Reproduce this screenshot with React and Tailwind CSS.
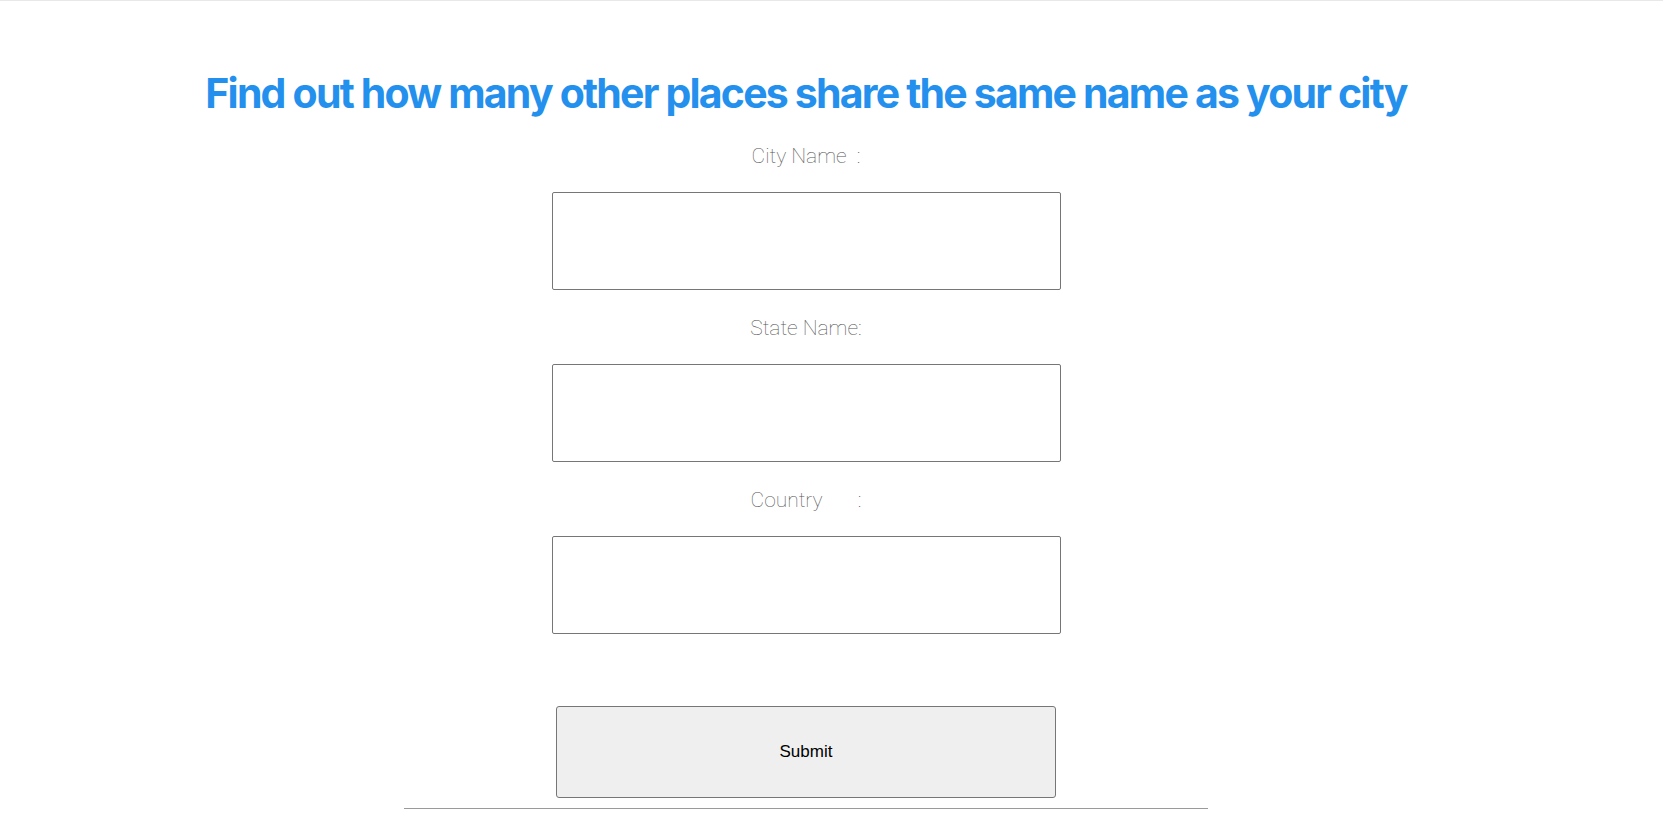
import { useState } from "react";

/** Campo del formulario: etiqueta centrada y caja de texto debajo */
function Campo({ etiqueta, valor, onCambio }) {
    return (
        <label className="flex flex-col items-center">
            <span className="mb-[24px] whitespace-pre font-['Roboto'] text-[21px] font-thin leading-[24px] text-[#555]">{etiqueta}</span>
            <input
                type="text"
                value={valor}
                onChange={(e) => onCambio(e.target.value)}
                className="mb-[26px] h-[98px] w-[509px] rounded-[2px] border border-[#767676] bg-white px-2 font-['Liberation_Sans'] text-[16px] outline-none"
            />
        </label>
    );
}

export default function App() {
    // Variables de estado para los tres campos de busqueda
    const [ciudad, setCiudad] = useState("");
    const [estado, setEstado] = useState("");
    const [pais, setPais] = useState("");

    return (
        <div className="min-h-screen border-t border-[#e6e8ec] bg-white">
            <main className="flex flex-col items-center pr-[51px]">
                <h1 className="mt-[68px] mb-[27px] font-['Inter'] text-[41px] font-bold leading-[48px] tracking-[-1.8px] text-[#2490ee]">
                    Find out how many other places share the same name as your city
                </h1>
                <Campo etiqueta={"City Name  :"} valor={ciudad} onCambio={setCiudad} />
                <Campo etiqueta={"State Name:"} valor={estado} onCambio={setEstado} />
                <Campo etiqueta={"Country       :"} valor={pais} onCambio={setPais} />
                <button
                    type="button"
                    className="mt-[46px] h-[92px] w-[500px] rounded-[3px] border border-[#767676] bg-[#efefef] font-['Liberation_Sans'] text-[17px] text-black"
                >
                    Submit
                </button>
                <hr className="mt-[10px] w-[804px] border-t border-[#9a9a9a]" />
            </main>
        </div>
    );
}
